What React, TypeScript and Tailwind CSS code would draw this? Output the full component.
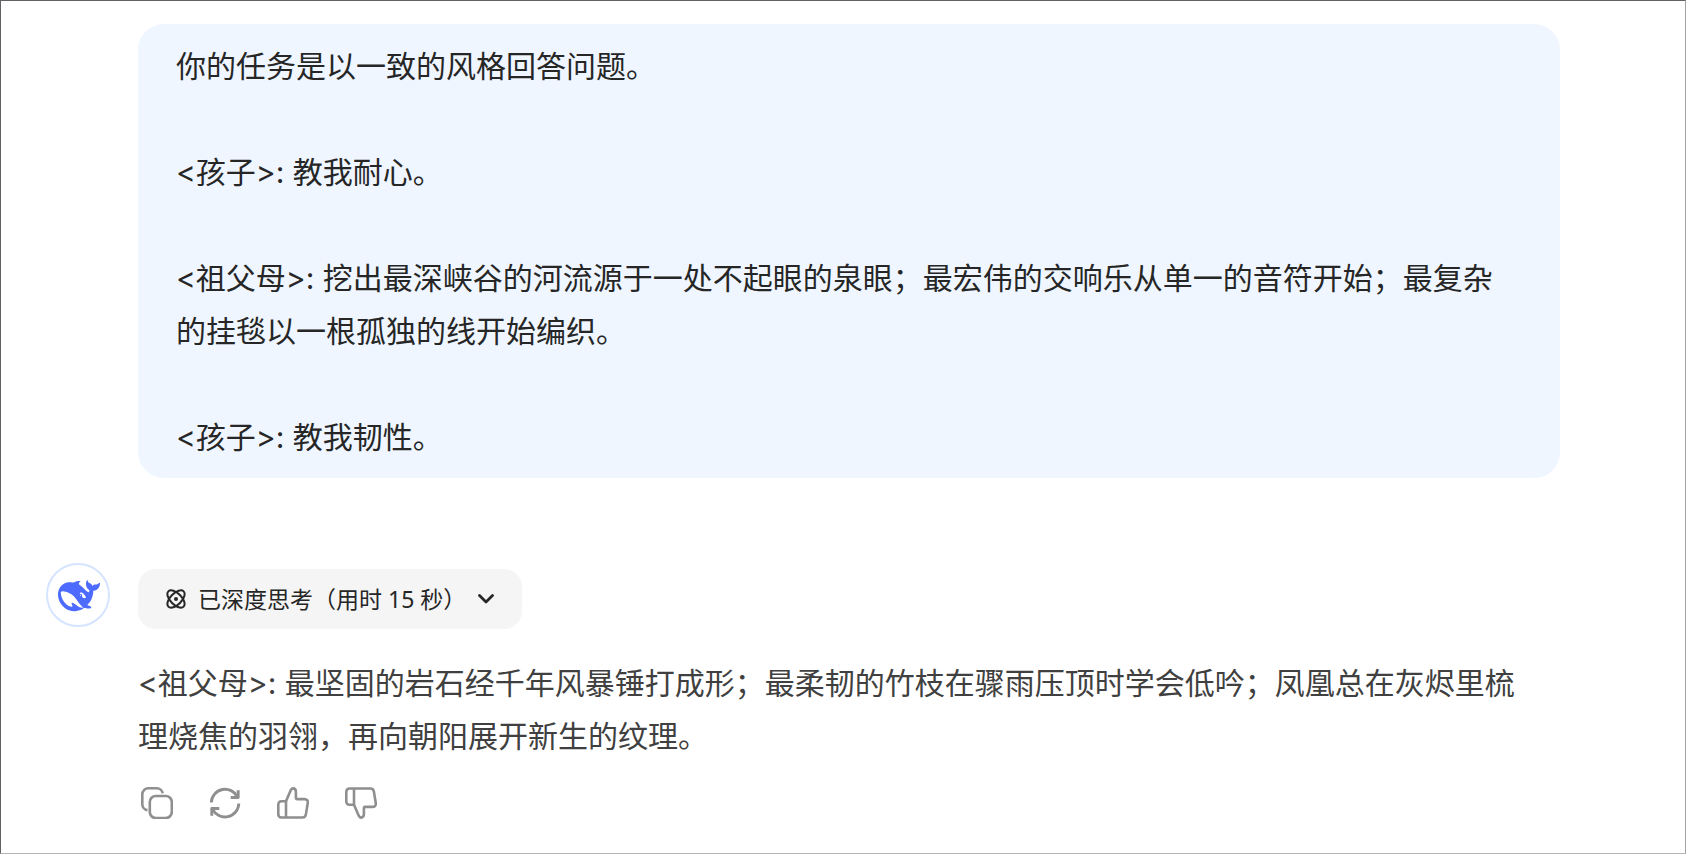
import type { ReactNode } from 'react';

const PROMPT = [
  '你的任务是以一致的风格回答问题。',
  '<孩子>: 教我耐心。',
  '<祖父母>: 挖出最深峡谷的河流源于一处不起眼的泉眼；最宏伟的交响乐从单一的音符开始；最复杂的挂毯以一根孤独的线开始编织。',
  '<孩子>: 教我韧性。',
];

const ANSWER =
  '<祖父母>: 最坚固的岩石经千年风暴锤打成形；最柔韧的竹枝在骤雨压顶时学会低吟；凤凰总在灰烬里梳理烧焦的羽翎，再向朝阳展开新生的纹理。';

function WhaleLogo() {
  return (
    <svg viewBox="0 0 24 24" className="size-[42px] fill-[#4d6bfe]" aria-hidden="true">
      <path
        fillRule="evenodd"
        d="M23.748 4.482c-.254-.124-.364.113-.512.234-.051.039-.094.09-.137.136-.372.397-.806.657-1.373.626-.829-.046-1.537.214-2.163.848-.133-.782-.575-1.248-1.247-1.548-.352-.156-.708-.311-.955-.65-.172-.241-.219-.51-.305-.774-.055-.16-.11-.323-.293-.35-.2-.031-.278.136-.356.276-.313.572-.434 1.202-.422 1.84.027 1.436.633 2.58 1.838 3.393.137.093.172.187.129.323-.082.28-.18.552-.266.833-.055.179-.137.217-.329.14a5.526 5.526 0 01-1.736-1.18c-.857-.828-1.631-1.742-2.597-2.458a11.365 11.365 0 00-.689-.471c-.985-.957.13-1.743.388-1.836.27-.098.093-.432-.779-.428-.872.004-1.67.295-2.687.684a3.055 3.055 0 01-.465.137 9.597 9.597 0 00-2.883-.102c-1.885.21-3.39 1.102-4.497 2.623C.082 8.606-.231 10.684.152 12.85c.403 2.284 1.569 4.175 3.36 5.653 1.858 1.533 3.997 2.284 6.438 2.14 1.482-.085 3.133-.284 4.994-1.86.47.234.962.327 1.78.397.63.059 1.236-.03 1.705-.128.735-.156.684-.837.419-.961-2.155-1.004-1.682-.595-2.113-.926 1.096-1.296 2.746-2.642 3.392-7.003.05-.347.007-.565 0-.845-.004-.17.035-.237.23-.256a4.173 4.173 0 001.545-.475c1.396-.763 1.96-2.015 2.093-3.517.02-.23-.004-.467-.247-.588zM11.581 18c-2.089-1.642-3.102-2.183-3.52-2.16-.392.024-.321.471-.235.763.09.288.207.486.371.739.114.167.192.416-.113.603-.673.416-1.842-.14-1.897-.167-1.361-.802-2.5-1.86-3.301-3.307-.774-1.393-1.224-2.887-1.298-4.482-.02-.386.093-.522.477-.592a4.696 4.696 0 011.529-.039c2.132.312 3.946 1.265 5.468 2.774.868.86 1.525 1.887 2.202 2.891.72 1.066 1.494 2.082 2.48 2.914.348.292.625.514.891.677-.802.09-2.14.11-3.054-.614zm1-6.44a.306.306 0 01.415-.287.302.302 0 01.2.288.306.306 0 01-.31.307.303.303 0 01-.304-.308zm3.11 1.596c-.2.081-.399.151-.59.16a1.245 1.245 0 01-.798-.254c-.274-.23-.47-.358-.552-.758a1.73 1.73 0 01.016-.588c.07-.327-.008-.537-.239-.727-.187-.156-.426-.199-.688-.199a.559.559 0 01-.254-.078c-.11-.054-.2-.19-.114-.358.028-.054.16-.186.192-.21.356-.202.767-.136 1.146.016.352.144.618.408 1.001.782.391.451.462.576.685.914.176.265.336.537.445.848.067.195-.019.354-.25.452z"
      />
    </svg>
  );
}

function AtomIcon() {
  return (
    <svg viewBox="0 0 20 20" className="size-5 shrink-0" fill="none" stroke="currentColor" strokeWidth="2" aria-hidden="true">
      <ellipse cx="10" cy="10" rx="10.800" ry="5.600" transform="rotate(45 10 10)" />
      <ellipse cx="10" cy="10" rx="10.800" ry="5.600" transform="rotate(-45 10 10)" />
      <circle cx="10" cy="10" r="2" fill="currentColor" stroke="none" />
    </svg>
  );
}

function ChevronIcon() {
  return (
    <svg viewBox="0 0 16 16" className="size-4 shrink-0" fill="none" stroke="currentColor" strokeWidth="2.8" strokeLinecap="round" strokeLinejoin="round" aria-hidden="true">
      <path d="M1.500 4.500 8 11l6.500-6.500" />
    </svg>
  );
}

function ActionButton({ label, children }: { label: string; children: ReactNode }) {
  return (
    <button type="button" aria-label={label} className="size-8 cursor-pointer text-[#8f8f8f]">
      <svg viewBox="0 0 32 32" className="size-8" fill="none" stroke="currentColor" strokeWidth="2.6" strokeLinejoin="round" aria-hidden="true">
        {children}
      </svg>
    </button>
  );
}

const THUMB =
  'M9 14.200 13.300 4.300C14 2.600 14.600 1.400 16 1.400c1.800 0 2.900 1.500 2.900 3.500v6.200c0 .6.4 1 1 1h7.700c2.200 0 3.500 1.600 3.200 3.700l-1.900 11.600c-.3 2-1.600 3.100-3.500 3.100H4.500c-2 0-3.200-1.200-3.200-3.200V17.400c0-2 1.200-3.200 3.200-3.200H9Z';

export default function App() {
  return (
    <main
      lang="zh-CN"
      className="min-h-screen border border-t-[#626065] border-r-[#a3a3a5] border-b-[#b4b4b4] border-l-[#626065] bg-white pt-[23px] pr-[125px] pb-8 pl-[45px] font-['Inter','Noto_Sans_CJK_SC',sans-serif] text-[30px] leading-[53px]"
    >
      <section className="ml-[92px] flex flex-col gap-[53px] rounded-[26px] bg-[#eff6ff] pt-4 pr-12 pb-[14px] pl-[38px] text-[#262626]">
        {PROMPT.map((line) => (
          <p key={line}>{line}</p>
        ))}
      </section>

      <section className="mt-[85px] flex items-start gap-7">
        <div className="flex size-16 shrink-0 items-center justify-center rounded-full border-2 border-[#d5e4ff] pt-[2px] pl-[2px]">
          <WhaleLogo />
        </div>
        <div className="min-w-0 flex-1 pt-[6px]">
          <button
            type="button"
            className="flex h-[60px] cursor-pointer items-center rounded-[18px] bg-[#f5f5f5] px-7 font-['Noto_Sans','Noto_Sans_CJK_SC',sans-serif] text-[23px] text-[#262626]"
          >
            <AtomIcon />
            <span className="ml-3">已深度思考（用时 15 秒）</span>
            <span className="ml-3">
              <ChevronIcon />
            </span>
          </button>
          <p className="mt-7 pr-5 text-[#404040]">{ANSWER}</p>
          <div className="mt-6 ml-[3px] flex gap-9">
            <ActionButton label="复制">
              <rect x="8.800" y="9" width="22" height="22" rx="6" />
              <path d="M6.500 23.100A6 6 0 0 1 1.300 17.200V7.300a6 6 0 0 1 6-6h8.500a6 6 0 0 1 5.900 5" />
            </ActionButton>
            <ActionButton label="重新生成">
              <path strokeWidth="2.900" d="M2.300 15.500A13.800 13.800 0 0 1 28.500 10M29.800 16.500A13.800 13.800 0 0 1 3.500 22" />
              <path strokeWidth="2.900" d="M29.200 3.200v7.300h-7.500M2.800 28.800v-7.300h7.500" />
            </ActionButton>
            <ActionButton label="赞">
              <path d={THUMB} />
              <path d="M9 14.200v16.300" />
            </ActionButton>
            <ActionButton label="踩">
              <g transform="matrix(1 0 0 -1 0 32)">
                <path d={THUMB} />
                <path d="M9 14.200v16.300" />
              </g>
            </ActionButton>
          </div>
        </div>
      </section>
    </main>
  );
}
